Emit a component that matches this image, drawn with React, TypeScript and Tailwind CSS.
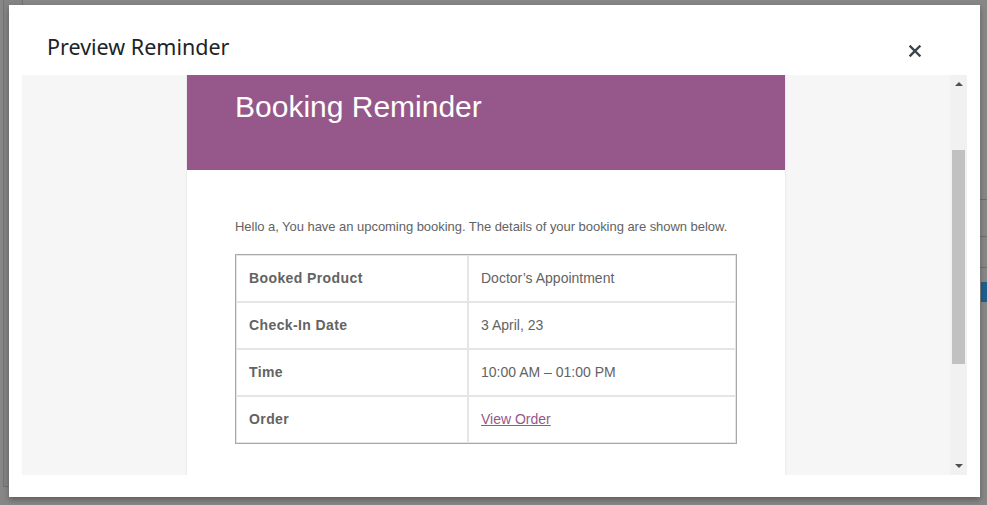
import React from "react";

const rows: { label: string; value: string; link?: boolean }[] = [
  { label: "Booked Product", value: "Doctor’s Appointment" },
  { label: "Check-In Date", value: "3 April, 23" },
  { label: "Time", value: "10:00 AM – 01:00 PM" },
  { label: "Order", value: "View Order", link: true },
];

function CloseIcon() {
  return (
    <svg width="12" height="12" viewBox="0 0 12 12" aria-hidden="true">
      <path d="M1.5 1.5 L10.5 10.5 M10.5 1.5 L1.5 10.5" stroke="#3c434a" strokeWidth="2.4" strokeLinecap="square" />
    </svg>
  );
}

function Scrollbar() {
  return (
    <div className="flex w-[17px] shrink-0 flex-col items-center bg-[#f1f1f1]">
      <div className="mt-[7px] h-0 w-0 border-x-[4px] border-b-[4px] border-x-transparent border-b-[#505050]" />
      <div className="mt-[64px] h-[214px] w-[13px] bg-[#c1c1c1]" />
      <div className="mt-auto mb-[7px] h-0 w-0 border-x-[4px] border-t-[4px] border-x-transparent border-t-[#505050]" />
    </div>
  );
}

function EmailPreview() {
  return (
    <div className="mx-auto w-[598px] shrink-0 bg-white shadow-[0_0_2px_rgba(0,0,0,0.12)] font-['Liberation_Sans',Arial,sans-serif]">
      <div className="h-[95px] bg-[#96588a] px-[48px] pt-[15px]">
        <h1 className="text-[30px] leading-[34px] text-white">Booking Reminder</h1>
      </div>
      <div className="px-[48px] pt-[47px] pb-[48px] text-[14px] leading-[21px] text-[#636363]">
        <p className="mb-[17px] text-[13px] leading-[20px] tracking-[-0.04px]">
          Hello a, You have an upcoming booking. The details of your booking are shown below.
        </p>
        <table className="w-[502px] border-separate border-spacing-0 border border-[#a8a8a8]">
          <tbody>
            {rows.map((row) => (
              <tr key={row.label}>
                <th className="w-[232px] border border-[#e5e5e5] p-[12px] text-left font-bold tracking-[0.4px]">
                  {row.label}
                </th>
                <td className="border border-[#e5e5e5] p-[12px]">
                  {row.link ? (
                    <a href="#" className="text-[#96588a] underline">
                      {row.value}
                    </a>
                  ) : (
                    row.value
                  )}
                </td>
              </tr>
            ))}
          </tbody>
        </table>
      </div>
    </div>
  );
}

export default function App() {
  return (
    <div className="relative h-[505px] w-[987px] overflow-hidden bg-[#878787] font-['Noto_Sans',sans-serif]">
      {/* dimmed page underneath the overlay */}
      <div className="flex h-full">
        <div className="ml-[3px] h-[487px] w-[20px] border-r border-b border-l border-[#727272] bg-[#848484]" />
        <div className="ml-auto flex w-[22px] flex-col pt-[104px] text-[13px] text-[#2a2a2a]">
          <span className="pl-[3px]">a</span>
          <span className="mt-[12px] pl-[1px]">ar</span>
          <div className="mt-[44px] h-px bg-[#6f6f6f]" />
          <div className="mt-[36px] h-px bg-[#6f6f6f]" />
          <span className="mt-[6px] text-[13px]">S</span>
          <div className="mt-[4px] h-px bg-[#6f6f6f]" />
          <div className="mt-[14px] ml-[16px] h-[20px] w-[6px] bg-[#1d5f8f]" />
        </div>
      </div>

      <div className="absolute left-[9px] top-[5px] flex h-[492px] w-[971px] flex-col bg-white shadow-[0_3px_6px_rgba(0,0,0,0.3)]">
        <div className="flex h-[70px] shrink-0 items-start justify-between pl-[38px] pr-[59px]">
          <h2 className="pt-[28px] text-[21.5px] leading-[28px] text-[#1d2327]">Preview Reminder</h2>
          <button type="button" className="mt-[40px]" aria-label="Close">
            <CloseIcon />
          </button>
        </div>
        <div className="mx-[13px] flex h-[400px] overflow-hidden">
          <div className="flex flex-1 justify-center overflow-hidden bg-[#f6f6f6]">
            <EmailPreview />
          </div>
          <Scrollbar />
        </div>
      </div>
    </div>
  );
}
